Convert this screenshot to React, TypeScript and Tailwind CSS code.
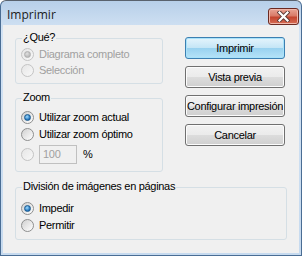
import React, { useState } from 'react';

const FONT = "font-['Liberation_Sans',Arial,sans-serif] text-[11px] tracking-[-0.3px]";

interface RadioProps {
  checked?: boolean;
  disabled?: boolean;
}

const Radio: React.FC<RadioProps> = ({ checked = false, disabled = false }) => {
  return (
    <span
      className={`relative flex items-center justify-center w-[13px] h-[13px] rounded-full border shrink-0 ${
        disabled
          ? 'border-[#c4c4c4] bg-[linear-gradient(135deg,#e6e6e6,#f8f8f8)]'
          : 'border-[#8e8f8f] bg-[linear-gradient(135deg,#d0d0d0,#ffffff)]'
      }`}
    >
      {checked && (
        <span
          className={`w-[7px] h-[7px] rounded-full ${
            disabled
              ? 'bg-[radial-gradient(circle_at_40%_35%,#e0e0e0,#a8a8a8)] border border-[#b0b0b0]'
              : 'bg-[radial-gradient(circle_at_40%_35%,#9fdcff,#1d6fb8_70%)] border border-[#1a5a8f]'
          }`}
        />
      )}
    </span>
  );
};

interface OptionProps {
  label: string;
  checked?: boolean;
  disabled?: boolean;
  onClick?: () => void;
}

const Option: React.FC<OptionProps> = ({ label, checked, disabled, onClick }) => (
  <div className="flex items-center h-[16px] gap-[5px] cursor-default" onClick={disabled ? undefined : onClick}>
    <Radio checked={checked} disabled={disabled} />
    <span className={disabled ? 'text-[#a0a0a0]' : 'text-black'}>{label}</span>
  </div>
);

interface GroupBoxProps {
  label: string;
  className?: string;
  children: React.ReactNode;
}

const GroupBox: React.FC<GroupBoxProps> = ({ label, className = '', children }) => (
  <div className={`relative border border-[#d5dfe5] rounded-[3px] pl-[5px] ${className}`}>
    <span className="absolute -top-[8px] left-[6px] px-[1px] bg-[#f0f0f0] leading-[13px] text-black">{label}</span>
    {children}
  </div>
);

interface ButtonProps {
  label: string;
  primary?: boolean;
}

const Button: React.FC<ButtonProps> = ({ label, primary }) => (
  <button
    className={`h-[22px] w-full rounded-[3px] border text-black whitespace-nowrap leading-none ${
      primary
        ? 'border-[#3c7fb1] bg-[linear-gradient(#e5f4fc_0%,#c4e5f6_50%,#98d1ef_50%,#b6e3f8_100%)] shadow-[inset_0_0_0_1px_#a8e2fa]'
        : 'border-[#707070] bg-[linear-gradient(#f2f2f2_0%,#ebebeb_50%,#dddddd_50%,#cfcfcf_100%)] shadow-[inset_0_0_0_1px_#fcfcfc]'
    }`}
  >
    {label}
  </button>
);

export default function App() {
  const [zoom, setZoom] = useState<'actual' | 'optimo' | 'custom'>('actual');
  const [split, setSplit] = useState<'impedir' | 'permitir'>('impedir');

  return (
    <div className={`w-[302px] h-[256px] flex flex-col rounded-t-[6px] border border-[#4a6d94] border-t-[#59626e] bg-[linear-gradient(#b7cfe9,#d3e3f4_30px,#c6daef)] ${FONT}`}>
      {/* title bar */}
      <div className="h-[24px] flex items-center pl-[6px] pr-[2px] shrink-0">
        <span className="mt-[4px] flex-1 font-['Open_Sans',sans-serif] text-[12px] tracking-normal text-[#1b1b1b]">Imprimir</span>
        <div className="mt-[6px] w-[31px] h-[17px] rounded-[3px] border border-[#6b2a22] bg-[linear-gradient(#e8a495_0%,#d97b68_45%,#c4452f_55%,#d66d55_100%)] shadow-[inset_0_0_0_1px_#f0b7aa] flex items-center justify-center">
          <svg width="13" height="11" viewBox="0 0 13 11">
            <path d="M2.5 1.5 L10.5 9.5 M10.5 1.5 L2.5 9.5" stroke="#5a3a36" strokeWidth="4" strokeLinecap="square" />
            <path d="M2.5 1.5 L10.5 9.5 M10.5 1.5 L2.5 9.5" stroke="#ffffff" strokeWidth="2.2" strokeLinecap="square" />
          </svg>
        </div>
      </div>

      {/* client area */}
      <div className="flex-1 mx-[2px] mb-[2px] bg-[#f0f0f0] px-[12px] flex flex-col">
        <div className="flex">
          <div className="w-[148px] flex flex-col">
            <GroupBox label="¿Qué?" className="mt-[13px] h-[46px] pt-[7px]">
              <Option label="Diagrama completo" checked disabled />
              <Option label="Selección" disabled />
            </GroupBox>

            <GroupBox label="Zoom" className="mt-[14px] h-[74px] pt-[10px]">
              <div className="flex flex-col">
                <div className="h-[17px] flex items-center">
                  <Option label="Utilizar zoom actual" checked={zoom === 'actual'} onClick={() => setZoom('actual')} />
                </div>
                <div className="h-[17px] flex items-center">
                  <Option label="Utilizar zoom óptimo" checked={zoom === 'optimo'} onClick={() => setZoom('optimo')} />
                </div>
                <div className="mt-[2px] flex items-center gap-[5px]">
                  <Radio checked={zoom === 'custom'} disabled />
                  <div className="w-[38px] h-[19px] border border-[#c0c0c0] bg-[#f0f0f0] flex items-center pl-[3px] text-[#a0a0a0]">100</div>
                  <span className="ml-[1px] text-black">%</span>
                </div>
              </div>
            </GroupBox>
          </div>

          <div className="ml-[22px] mt-[12px] w-[100px] flex flex-col gap-[7px]">
            <Button label="Imprimir" primary />
            <Button label="Vista previa" />
            <Button label="Configurar impresión" />
            <Button label="Cancelar" />
          </div>
        </div>

        <GroupBox label="División de imágenes en páginas" className="mt-[15px] h-[53px] pt-[12px]">
          <div className="h-[17px] flex items-center">
            <Option label="Impedir" checked={split === 'impedir'} onClick={() => setSplit('impedir')} />
          </div>
          <div className="h-[17px] flex items-center">
            <Option label="Permitir" checked={split === 'permitir'} onClick={() => setSplit('permitir')} />
          </div>
        </GroupBox>
      </div>
    </div>
  );
}
